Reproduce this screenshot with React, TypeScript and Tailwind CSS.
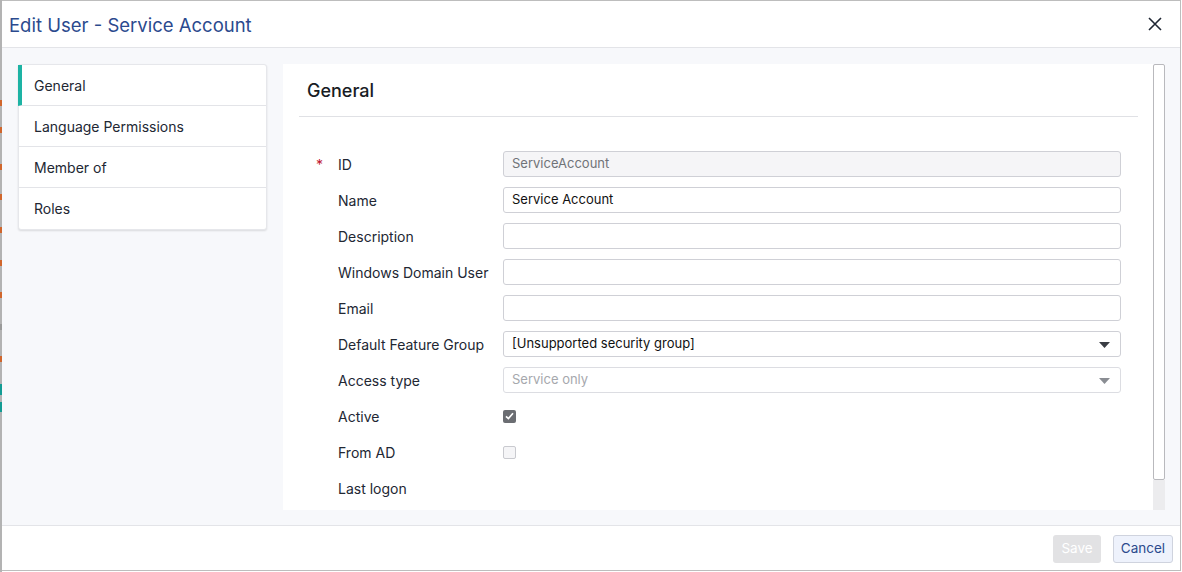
const fields = [
  { label: "ID", required: true, kind: "text", value: "ServiceAccount", disabled: true },
  { label: "Name", kind: "text", value: "Service Account" },
  { label: "Description", kind: "text", value: "" },
  { label: "Windows Domain User", kind: "text", value: "" },
  { label: "Email", kind: "text", value: "" },
  { label: "Default Feature Group", kind: "select", value: "[Unsupported security group]" },
  { label: "Access type", kind: "select", value: "Service only", disabled: true },
  { label: "Active", kind: "check", checked: true },
  { label: "From AD", kind: "check", checked: false, disabled: true },
  { label: "Last logon", kind: "none" },
];

const navItems = ["General", "Language Permissions", "Member of", "Roles"];

const marks = [
  { top: 100, color: "bg-[#d0662c]" },
  { top: 127, color: "bg-[#d0662c]" },
  { top: 164, color: "bg-[#d0662c]" },
  { top: 194, color: "bg-[#d0662c]" },
  { top: 227, color: "bg-[#d0662c]" },
  { top: 260, color: "bg-[#d0662c]" },
  { top: 292, color: "bg-[#d0662c]" },
  { top: 324, color: "bg-[#9a9a9a]" },
  { top: 356, color: "bg-[#d0662c]" },
  { top: 384, color: "bg-[#139c94]", h: 11 },
  { top: 402, color: "bg-[#139c94]", h: 10 },
];

function Caret({ muted }: { muted?: boolean }) {
  return (
    <svg width="11" height="6" viewBox="0 0 11 6" className="absolute right-[10px] top-[10px]">
      <path d="M0 0 H11 L5.5 6 Z" fill={muted ? "#8a8d93" : "#3a3d44"} />
    </svg>
  );
}

function Field({ f }: { f: (typeof fields)[number] }) {
  if (f.kind === "text") {
    return (
      <div
        className={`h-[26px] w-[618px] rounded-[3px] border border-[#cfd0d6] px-[8px] flex items-center text-[13px] ${
          f.disabled ? "bg-[#f5f5f7] text-[#707378]" : "bg-white text-[#111]"
        }`}
      >
        {f.value}
      </div>
    );
  }
  if (f.kind === "select") {
    return (
      <div
        className={`relative h-[26px] w-[618px] rounded-[3px] border px-[8px] flex items-center text-[13px] bg-white ${
          f.disabled ? "border-[#dcdde2] text-[#a6a8ad]" : "border-[#cfd0d6] text-[#111]"
        }`}
      >
        {f.value}
        <Caret muted={f.disabled} />
      </div>
    );
  }
  if (f.kind === "check") {
    return f.checked ? (
      <div className="w-[13px] h-[13px] rounded-[2px] bg-[#6b6d72] flex items-center justify-center">
        <svg width="9" height="8" viewBox="0 0 9 8">
          <path d="M1 4.3 L3.4 6.6 L8 1.2" stroke="white" strokeWidth="1.7" fill="none" />
        </svg>
      </div>
    ) : (
      <div className="w-[13px] h-[13px] rounded-[2px] border border-[#c9cacf] bg-[#f5f5f7]" />
    );
  }
  return <div className="h-[26px]" />;
}

export default function App() {
  return (
    <div
      className="relative w-[1182px] h-[572px] bg-white overflow-hidden"
      style={{ fontFamily: "Inter, 'Noto Sans', sans-serif" }}
    >
      {/* page behind the dialog, peeking at the left edge */}
      <div className="absolute left-0 top-0 w-[2px] h-full bg-[#b3b3b3]">
        {marks.map((m, i) => (
          <div
            key={i}
            className={`absolute left-0 w-[2px] ${m.color}`}
            style={{ top: m.top, height: m.h ?? 6 }}
          />
        ))}
      </div>

      <div className="ml-[1px] w-[1180px] h-[571px] border-t border-r border-b border-[#bdbdbd] flex flex-col bg-white">
        {/* header */}
        <div className="h-[47px] border-b border-[#e3e4e8] flex items-center justify-between pl-[8px] pr-[18px] pt-[3px]">
          <h1 className="text-[18.5px] text-[#2b4a8e]">Edit User - Service Account</h1>
          <svg width="14" height="14" viewBox="0 0 14 14" className="-mt-[4px]">
            <path d="M1 1 L13 13 M13 1 L1 13" stroke="#1f2633" strokeWidth="1.6" />
          </svg>
        </div>

        {/* body */}
        <div className="flex-1 bg-[#f7f8fb] flex pl-[17px] pt-[16px] pb-[15px] gap-[16px]">
          <div className="w-[249px] self-start bg-white rounded-[3px] border border-[#e6e7eb] shadow-[0_1px_2px_rgba(0,0,0,0.12)]">
            {navItems.map((n, i) => (
              <div
                key={n}
                className={`h-[41px] flex items-center text-[14px] text-[#222733] ${
                  i < navItems.length - 1 ? "border-b border-[#e3e4e8]" : ""
                } ${i === 0 ? "border-l-[4px] border-l-[#1db3a4] pl-[12px] -ml-[1px]" : "pl-[15px]"}`}
              >
                {n}
              </div>
            ))}
          </div>

          <div className="flex w-[882px]">
            <div className="w-[870px] bg-white">
              <div className="px-[16px] pr-[15px]">
                <div className="h-[53px] border-b border-[#e0e1e5] flex items-center pl-[8px]">
                  <h2 className="text-[18px] font-medium text-[#181c24]">General</h2>
                </div>
              </div>
              <div className="pt-[34px] pl-[33px] flex flex-col gap-[10px]">
                {fields.map((f) => (
                  <div key={f.label} className="flex items-center h-[26px]">
                    <span className="w-[22px] text-[#c0152f] text-[14px]">{f.required ? "*" : ""}</span>
                    <span className="w-[165px] text-[14px] text-[#222733]">{f.label}</span>
                    <Field f={f} />
                  </div>
                ))}
              </div>
            </div>
            <div className="w-[12px] flex flex-col">
              <div className="h-[416px] w-[12px] border border-[#b9b9bd] rounded-[2px] bg-white" />
              <div className="flex-1 bg-[#ececee]" />
            </div>
          </div>
        </div>

        {/* footer */}
        <div className="h-[45px] border-t border-[#e3e4e8] flex items-center justify-end gap-[12px] pr-[7px] pt-[1px]">
          <button className="h-[28px] w-[48px] rounded-[3px] bg-[#e2e2e4] text-white text-[13.5px]">Save</button>
          <button className="h-[28px] w-[60px] rounded-[3px] bg-[#eef2fc] border border-[#cfd3de] text-[#2b4a8e] text-[13.5px]">
            Cancel
          </button>
        </div>
      </div>
    </div>
  );
}
